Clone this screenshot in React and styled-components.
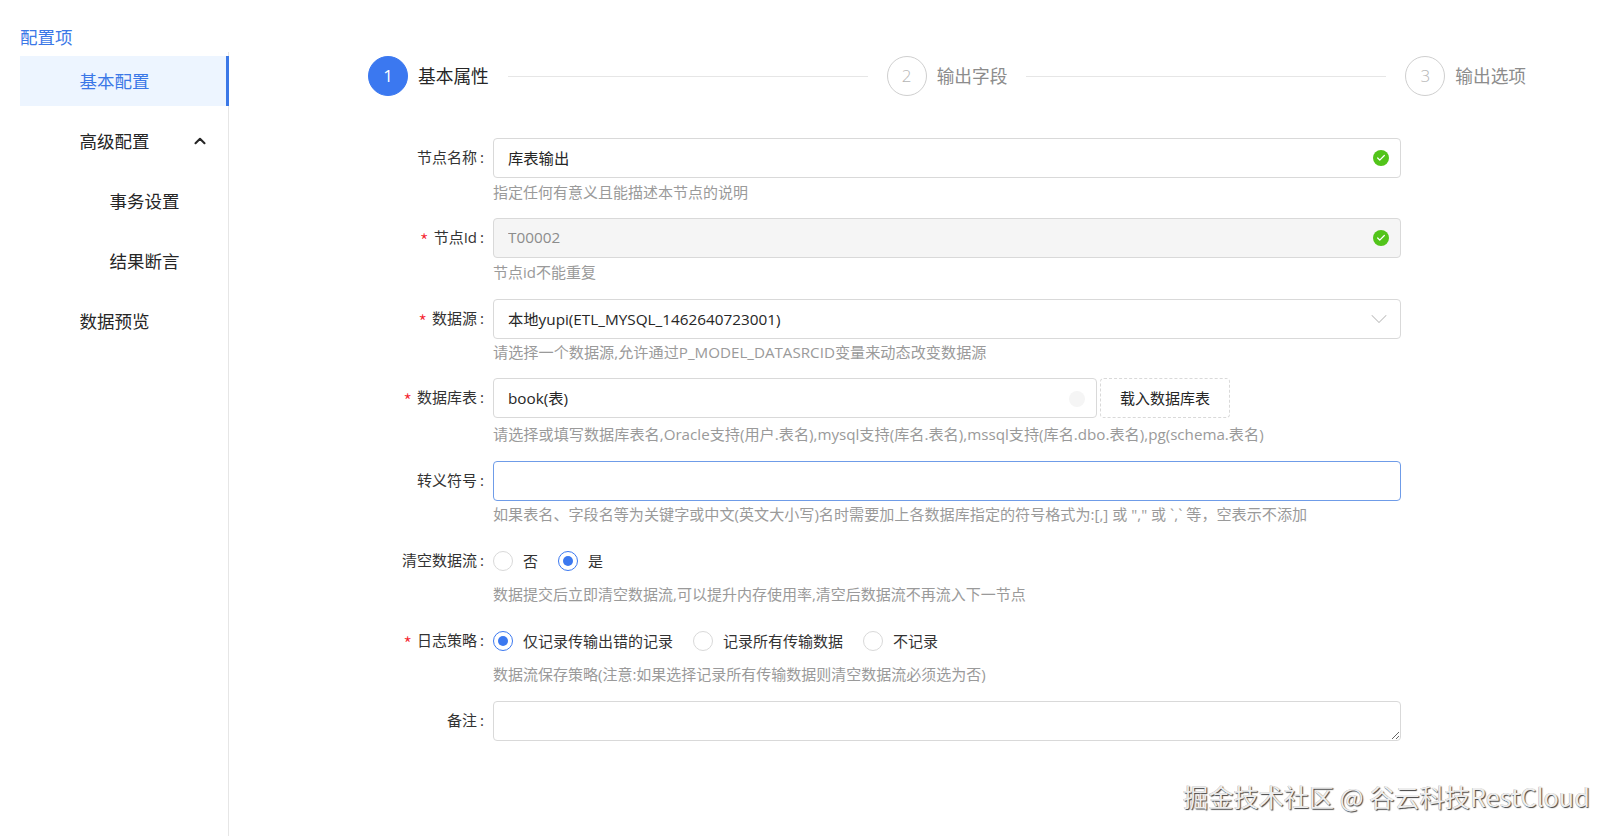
import React from "react";
import styled, { createGlobalStyle } from "styled-components";
import { ChevronUp, ChevronDown, Check } from "lucide-react";

const Global = createGlobalStyle`
  html, body { margin: 0; padding: 0; background: #fff; height: 100%; overflow: hidden; }
  #root { height: 836px; }
  * { box-sizing: border-box; }
  body { font-family: "Open Sans", "Noto Sans CJK SC", sans-serif; color: #262626; }
`;

const Page = styled.div`
  position: relative;
  display: flex;
  height: 836px;
`;
const Sidebar = styled.aside`
  width: 229px;
  padding: 26px 0 0 20px;
  display: flex;
  flex-direction: column;
  flex: none;
`;
const SideTitle = styled.div`
  height: 26px;
  line-height: 22px;
  font-size: 17.5px;
  color: #3b78e7;
`;
const Menu = styled.nav`
  flex: 1;
  padding-top: 4px;
  border-right: 1px solid #e6e6e6;
`;
const MenuItem = styled.div`
  position: relative;
  height: 50px;
  margin-bottom: 10px;
  margin-right: -1px;
  padding: 0 0 2px ${(p) => (p.$sub ? 89.5 : 59.5)}px;
  display: flex;
  align-items: center;
  font-size: 17.5px;
  color: ${(p) => (p.$active ? "#3b78e7" : "#262626")};
  background: ${(p) => (p.$active ? "#edf5ff" : "transparent")};
  border-right: ${(p) => (p.$active ? "3px solid #3b78e7" : "none")};
  svg { position: absolute; left: 171px; top: 16px; }
`;
const Main = styled.main`
  flex: 1;
  padding: 56px 0 0 139px;
  min-width: 0;
`;
const Steps = styled.div`
  display: flex;
  align-items: center;
  width: 1158px;
  height: 40px;
  margin-bottom: 42px;
`;
const Step = styled.div`
  display: flex;
  align-items: center;
  flex: none;
  gap: 10px;
`;
const StepCircle = styled.div`
  width: 40px;
  height: 40px;
  padding-bottom: 2px;
  border-radius: 50%;
  display: flex;
  align-items: center;
  justify-content: center;
  font-family: "Open Sans", sans-serif;
  font-size: 17px;
  font-weight: ${(p) => (p.$active ? 400 : 300)};
  color: ${(p) => (p.$active ? "#fff" : "#b5b5b5")};
  background: ${(p) => (p.$active ? "#3b78f0" : "#fff")};
  border: 1px solid ${(p) => (p.$active ? "#3b78f0" : "#cfcfcf")};
`;
const StepLabel = styled.div`
  font-size: 17.7px;
  padding-bottom: 2px;
  white-space: nowrap;
  color: ${(p) => (p.$active ? "#262626" : "#8c8c8c")};
`;
const StepLine = styled.div`
  flex: 1;
  height: 1px;
  background: #e6e6e6;
  margin: 0 19px;
`;
const Row = styled.div`
  display: flex;
  height: ${(p) => p.$h}px;
`;
const Label = styled.label`
  width: 125px;
  height: 40px;
  padding: 0 0 3px;
  flex: none;
  display: flex;
  align-items: center;
  justify-content: flex-end;
  font-size: 15px;
  color: #333;
  white-space: nowrap;
  &::after {
    content: ":";
    margin: 0 9px 0 3px;
  }
`;
const Star = styled.span`
  color: #f5222d;
  font-size: 20px;
  margin-right: 5px;
  font-family: "Noto Sans CJK SC", sans-serif;
  font-weight: 300;
  position: relative;
  top: 4px;
`;
const Field = styled.div`
  width: 908px;
  flex: none;
`;
const Control = styled.div`
  display: flex;
  gap: 3px;
  width: 737px;
  height: 40px;
  align-items: center;
`;
const InputWrap = styled.div`
  position: relative;
  flex: 1;
  height: 40px;
`;
const Input = styled.input`
  width: 100%;
  height: 100%;
  padding: 0 40px 2px 14px;
  outline: none;
  font: inherit;
  font-size: 15.3px;
  color: ${(p) => (p.disabled ? "#8c8c8c" : "#262626")};
  background: ${(p) => (p.disabled ? "#f5f5f5" : "#fff")};
  border: 1px solid ${(p) => (p.$focus ? "#6f9ce8" : "#d9d9d9")};
  border-radius: 4px;
`;
const TextArea = styled.textarea`
  display: block;
  width: 100%;
  height: 40px;
  padding: 8px 14px;
  outline: none;
  font: inherit;
  border: 1px solid #d9d9d9;
  border-radius: 4px;
  background: #fff;
`;
const OkIcon = styled.span`
  position: absolute;
  right: 12px;
  top: 12px;
  width: 16px;
  height: 16px;
  border-radius: 50%;
  background: #52c41a;
  color: #fff;
  display: flex;
  align-items: center;
  justify-content: center;
`;
const Arrow = styled.span`
  position: absolute;
  right: 8px;
  top: 6px;
  color: #bfbfbf;
  display: flex;
`;
const ClearDot = styled.span`
  position: absolute;
  right: 12px;
  top: 13px;
  width: 16px;
  height: 16px;
  border-radius: 50%;
  background: #f5f5f5;
`;
const DashedButton = styled.button`
  flex: none;
  width: 130px;
  height: 40px;
  padding: 0 0 2px;
  font: inherit;
  font-size: 15px;
  color: #262626;
  background: #fff;
  border: 1px dashed #d9d9d9;
  border-radius: 4px;
`;
const Help = styled.div`
  font-size: ${(p) => p.$size ?? 15}px;
  line-height: 22px;
  margin-top: ${(p) => p.$top ?? 2}px;
  color: #9a9a9a;
  white-space: nowrap;
`;
const RadioGroup = styled.div`
  display: flex;
  align-items: center;
  gap: 20px;
  height: 40px;
`;
const RadioItem = styled.div`
  display: flex;
  align-items: center;
  gap: 10px;
  font-size: 15px;
  color: #333;
`;
const RadioText = styled.span`
  padding-bottom: 2px;
`;
const RadioDot = styled.span`
  position: relative;
  width: 20px;
  height: 20px;
  border-radius: 50%;
  border: 1px solid ${(p) => (p.$on ? "#3b78f0" : "#d9d9d9")};
  background: #fff;
  &::after {
    content: "";
    display: ${(p) => (p.$on ? "block" : "none")};
    position: absolute;
    left: 4px;
    top: 4px;
    width: 10px;
    height: 10px;
    border-radius: 50%;
    background: #3b78f0;
  }
`;
const Watermark = styled.div`
  position: absolute;
  left: 1183px;
  top: 779px;
  font-family: "Noto Sans CJK SC", sans-serif;
  font-size: 25.2px;
  line-height: 34px;
  white-space: nowrap;
  color: #ededed;
  text-shadow: 1px 1px 1px rgba(0, 0, 0, 0.75), -0.5px -0.5px 0 rgba(0, 0, 0, 0.3);
`;

const Ok = () => (
  <OkIcon>
    <Check size={10} strokeWidth={3} />
  </OkIcon>
);

const Radio = ({ on, children }) => (
  <RadioItem>
    <RadioDot $on={on} />
    <RadioText>{children}</RadioText>
  </RadioItem>
);

export default function App() {
  return (
    <Page>
      <Global />
      <Sidebar>
        <SideTitle>配置项</SideTitle>
        <Menu>
          <MenuItem $active>基本配置</MenuItem>
          <MenuItem>
            高级配置
            <ChevronUp size={18} strokeWidth={2.8} />
          </MenuItem>
          <MenuItem $sub>事务设置</MenuItem>
          <MenuItem $sub>结果断言</MenuItem>
          <MenuItem>数据预览</MenuItem>
        </Menu>
      </Sidebar>
      <Main>
        <Steps>
          <Step>
            <StepCircle $active>1</StepCircle>
            <StepLabel $active>基本属性</StepLabel>
          </Step>
          <StepLine />
          <Step>
            <StepCircle>2</StepCircle>
            <StepLabel>输出字段</StepLabel>
          </Step>
          <StepLine />
          <Step>
            <StepCircle>3</StepCircle>
            <StepLabel>输出选项</StepLabel>
          </Step>
        </Steps>
        <Row $h={80}>
          <Label>节点名称</Label>
          <Field>
            <InputWrap>
              <Input readOnly value="库表输出" />
              <Ok />
            </InputWrap>
            <Help $top={3}>指定任何有意义且能描述本节点的说明</Help>
          </Field>
        </Row>
        <Row $h={81}>
          <Label>
            <Star>*</Star>节点Id
          </Label>
          <Field>
            <InputWrap>
              <Input disabled value="T00002" />
              <Ok />
            </InputWrap>
            <Help $top={3}>节点id不能重复</Help>
          </Field>
        </Row>
        <Row $h={79}>
          <Label>
            <Star>*</Star>数据源
          </Label>
          <Field>
            <InputWrap>
              <Input readOnly value="本地yupi(ETL_MYSQL_1462640723001)" />
              <Arrow>
                <ChevronDown size={28} strokeWidth={0.9} />
              </Arrow>
            </InputWrap>
            <Help $size={15.16}>请选择一个数据源,允许通过P_MODEL_DATASRCID变量来动态改变数据源</Help>
          </Field>
        </Row>
        <Row $h={83}>
          <Label>
            <Star>*</Star>数据库表
          </Label>
          <Field>
            <Control>
              <InputWrap>
                <Input readOnly value="book(表)" />
                <ClearDot />
              </InputWrap>
              <DashedButton>载入数据库表</DashedButton>
            </Control>
            <Help $top={5} $size={15.16}>
              请选择或填写数据库表名,Oracle支持(用户.表名),mysql支持(库名.表名),mssql支持(库名.dbo.表名),pg(schema.表名)
            </Help>
          </Field>
        </Row>
        <Row $h={80}>
          <Label>转义符号</Label>
          <Field>
            <InputWrap>
              <Input $focus readOnly value="" />
            </InputWrap>
            <Help $size={15.1}>
              如果表名、字段名等为关键字或中文(英文大小写)名时需要加上各数据库指定的符号格式为:[,] 或 "," 或 `,` 等，空表示不添加
            </Help>
          </Field>
        </Row>
        <Row $h={80}>
          <Label>清空数据流</Label>
          <Field>
            <RadioGroup>
              <Radio>否</Radio>
              <Radio on>是</Radio>
            </RadioGroup>
            <Help>数据提交后立即清空数据流,可以提升内存使用率,清空后数据流不再流入下一节点</Help>
          </Field>
        </Row>
        <Row $h={80}>
          <Label>
            <Star>*</Star>日志策略
          </Label>
          <Field>
            <RadioGroup>
              <Radio on>仅记录传输出错的记录</Radio>
              <Radio>记录所有传输数据</Radio>
              <Radio>不记录</Radio>
            </RadioGroup>
            <Help>数据流保存策略(注意:如果选择记录所有传输数据则清空数据流必须选为否)</Help>
          </Field>
        </Row>
        <Row $h={40}>
          <Label>备注</Label>
          <Field>
            <TextArea />
          </Field>
        </Row>
      </Main>
      <Watermark>掘金技术社区 @ 谷云科技RestCloud</Watermark>
    </Page>
  );
}
